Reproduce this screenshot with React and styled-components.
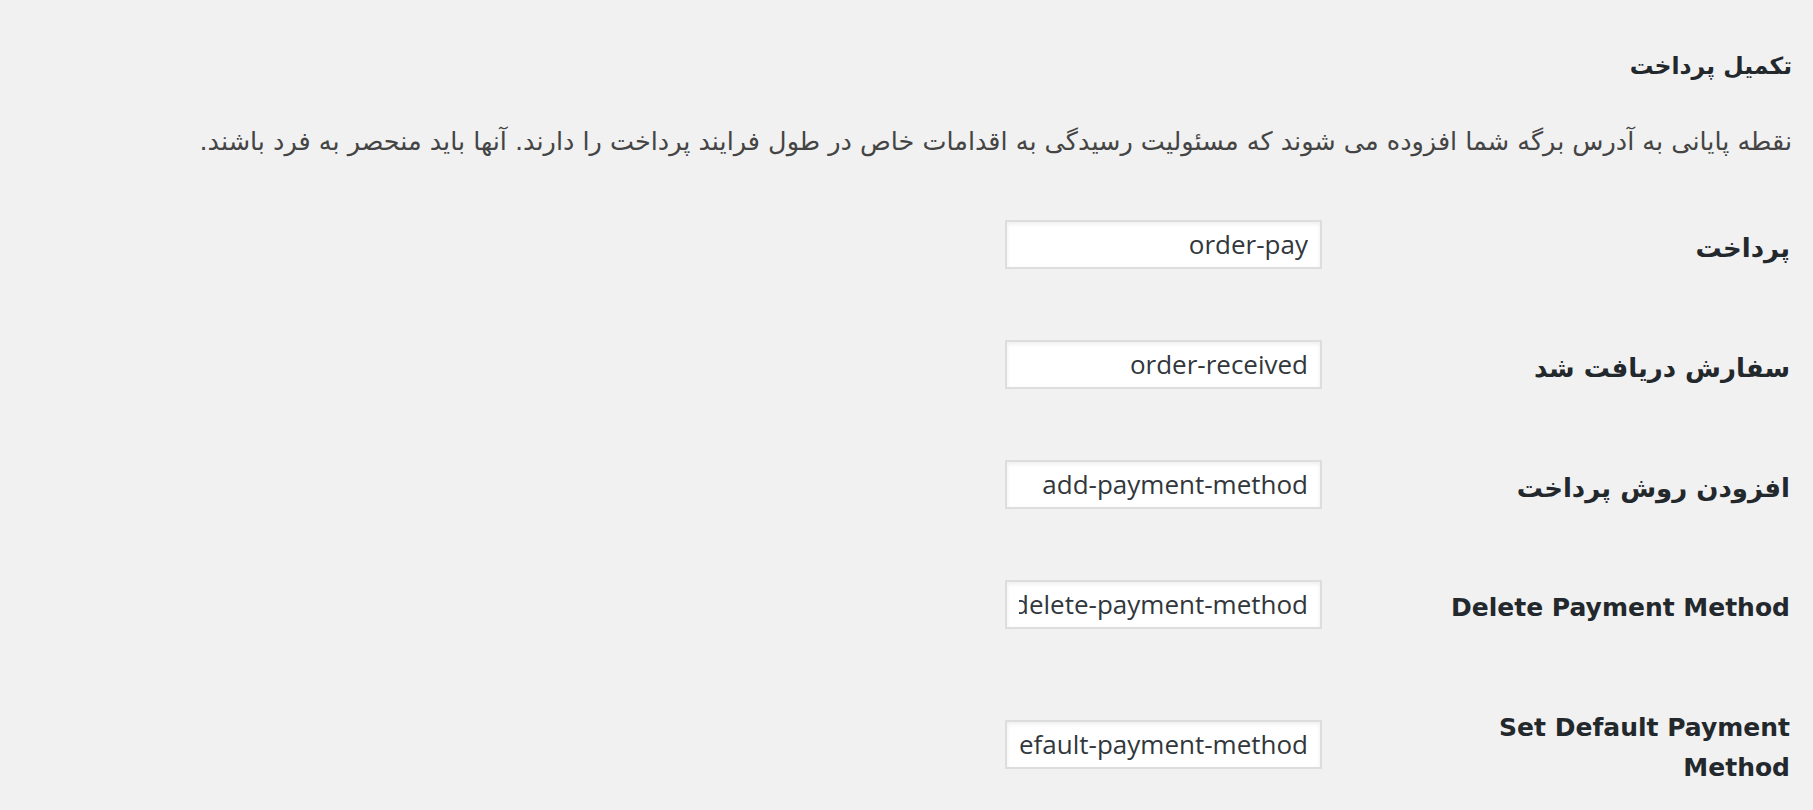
import React from 'react';
import styled, { createGlobalStyle } from 'styled-components';

// --- سبک‌های کلی صفحه ---
const GlobalStyle = createGlobalStyle`
  html, body {
    margin: 0;
    padding: 0;
    background: #f1f1f1;
  }
  body {
    direction: rtl;
    font-family: "DejaVu Sans", Tahoma, sans-serif;
  }
`;

const Page = styled.div`
  padding: 51px 21px 0 21px;
  min-height: 810px;
  box-sizing: border-box;
`;

const Title = styled.h2`
  margin: 0;
  font-size: 23.5px;
  line-height: 30px;
  font-weight: bold;
  color: #23282d;
`;

const Description = styled.p`
  margin: 42px 0 0 0;
  font-size: 25.5px;
  line-height: 36px;
  color: #444;
`;

const FormTable = styled.div`
  margin-top: 25px;
  display: flex;
  flex-direction: column;
`;

const Row = styled.div`
  display: grid;
  grid-template-columns: 470px 1fr;
  align-items: center;
`;

// برچسب‌های فارسی کمی بزرگ‌تر از انگلیسی دیده می‌شوند
const Label = styled.label`
  align-self: start;
  padding: 44px 2px 36px 88px;
  font-size: 26px;
  line-height: 40px;
  font-weight: bold;
  color: #23282d;

  &:lang(en) {
    font-size: 25px;
  }
`;

const Field = styled.div`
  display: flex;
`;

const TextInput = styled.input`
  width: 317px;
  height: 49px;
  box-sizing: border-box;
  padding: 0 12px;
  border: 2px solid #ddd;
  border-radius: 0;
  background: #fff;
  box-shadow: inset 0 2px 4px rgba(0, 0, 0, 0.07);
  font-family: "Open Sans", "Noto Sans", sans-serif;
  font-size: 26px;
  color: #32373c;
  direction: rtl;
  outline: none;
`;

const endpoints = [
  { label: 'پرداخت', value: 'order-pay', lang: 'fa' },
  { label: 'سفارش دریافت شد', value: 'order-received', lang: 'fa' },
  { label: 'افزودن روش پرداخت', value: 'add-payment-method', lang: 'fa' },
  { label: 'Delete Payment Method', value: 'delete-payment-method', lang: 'en' },
  { label: 'Set Default Payment Method', value: 'set-default-payment-method', lang: 'en' },
];

const App = () => {
  return (
    <>
      <GlobalStyle />
      <Page>
        <Title>تکمیل پرداخت</Title>
        <Description>
          نقطه پایانی به آدرس برگه شما افزوده می شوند که مسئولیت رسیدگی به اقدامات خاص در طول فرایند پرداخت را دارند. آنها باید منحصر به فرد باشند.
        </Description>

        <FormTable>
          {endpoints.map((item) => (
            <Row key={item.value}>
              <Label lang={item.lang}>{item.label}</Label>
              <Field>
                <TextInput type="text" defaultValue={item.value} />
              </Field>
            </Row>
          ))}
        </FormTable>
      </Page>
    </>
  );
};

export default App;
